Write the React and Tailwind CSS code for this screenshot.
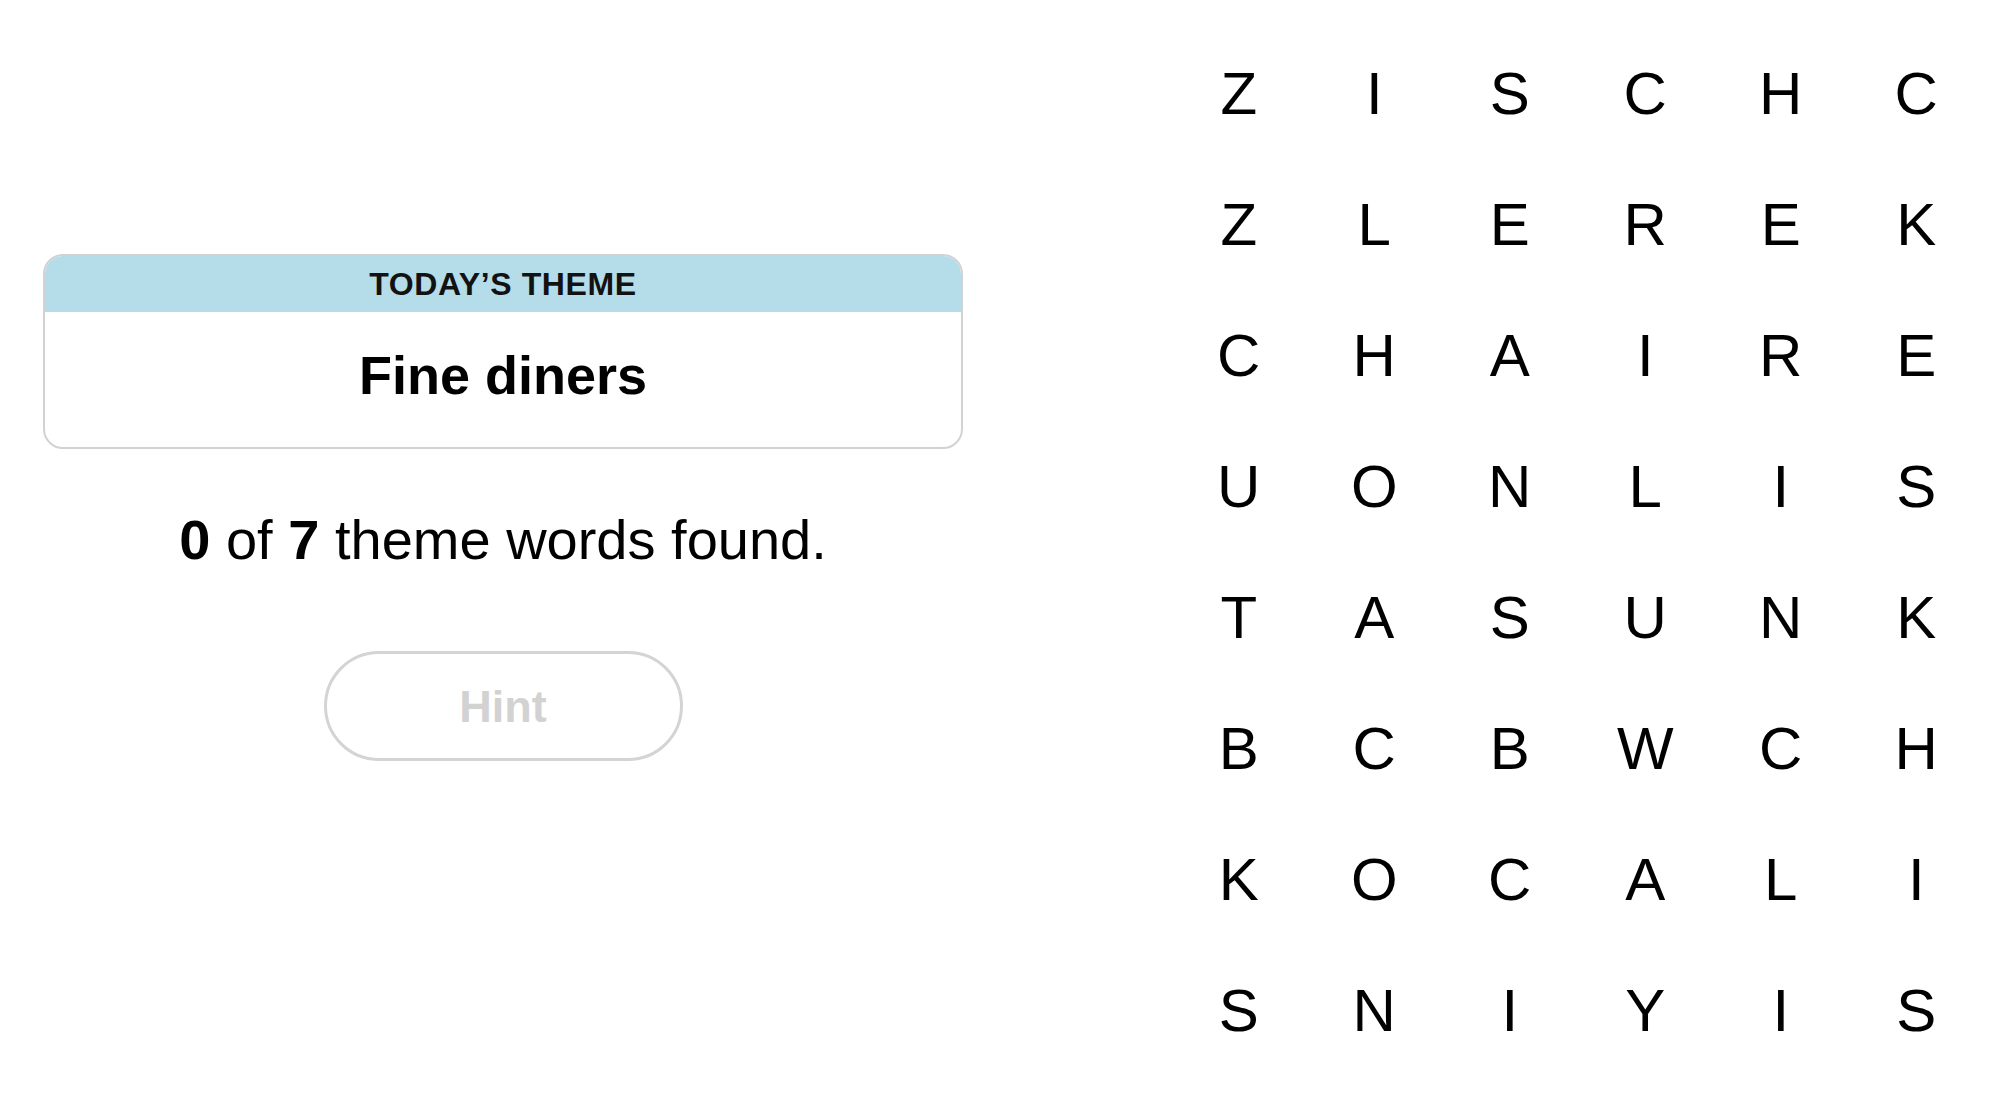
import React from 'react'

const rows = [
  'ZISCHC',
  'ZLEREK',
  'CHAIRE',
  'UONLIS',
  'TASUNK',
  'BCBWCH',
  'KOCALI',
  'SNIYIS',
]

const ThemeCard = () => (
  <div className="w-[920px] rounded-[20px] overflow-hidden border-2 border-[#d2d2d2] bg-white">
    <div className="h-[56px] bg-[#b5dce9] flex items-center justify-center">
      <span className="text-[32px] leading-none font-bold tracking-[0.6px] text-[#121212]">
        TODAY’S THEME
      </span>
    </div>
    <div className="h-[135px] pt-[36px] text-center">
      <span className="text-[54px] leading-none font-bold text-black">Fine diners</span>
    </div>
  </div>
)

const App = () => {
  return (
    <div className="w-[2000px] h-[1096px] bg-white flex font-['Liberation_Sans',Arial,sans-serif] overflow-hidden">
      {/* Left panel */}
      <div className="w-[1006px] flex flex-col items-center pt-[254px]">
        <ThemeCard />
        <p className="mt-[63px] text-[56px] leading-none text-black">
          <b>0</b> of <b>7</b> theme words found.
        </p>
        <button
          disabled
          className="mt-[83px] w-[359px] h-[110px] rounded-full border-[3px] border-[#d4d4d4] bg-white flex items-center justify-center"
        >
          <span className="text-[45px] leading-none font-bold text-[#d2d2d2]">Hint</span>
        </button>
      </div>

      {/* Letter grid */}
      <div className="ml-[165px] pt-[28px]">
        <div className="grid grid-cols-[repeat(6,135.5px)] grid-rows-[repeat(8,131.14px)]">
          {rows.map((row, r) =>
            row.split('').map((ch, c) => (
              <div key={`${r}-${c}`} className="flex items-center justify-center">
                <span className="text-[60px] leading-none text-black">{ch}</span>
              </div>
            ))
          )}
        </div>
      </div>
    </div>
  )
}

export default App
